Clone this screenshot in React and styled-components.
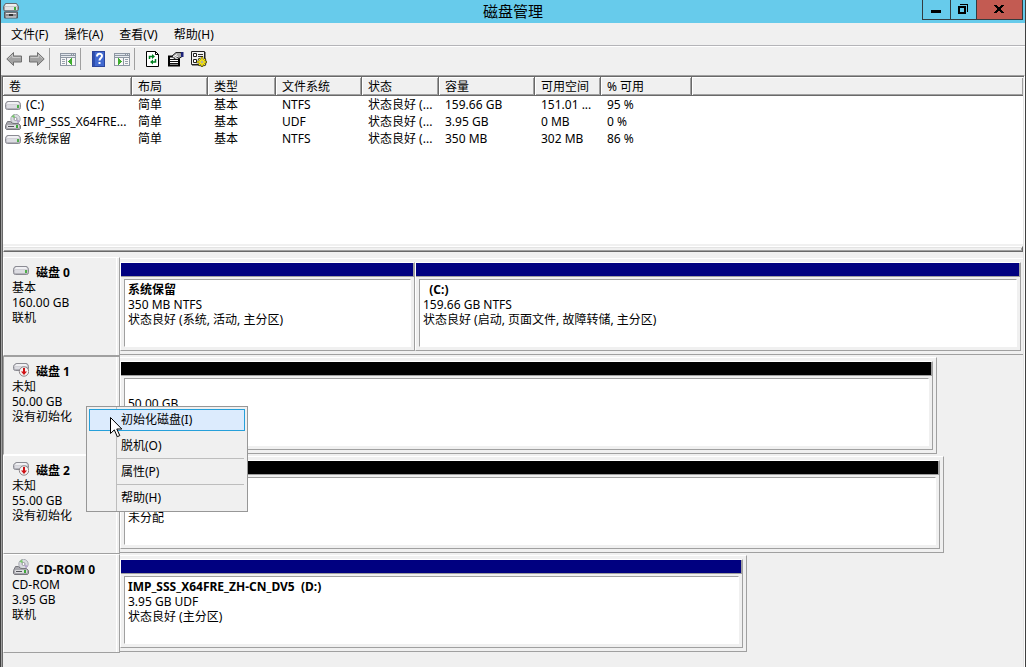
import styled, { createGlobalStyle } from "styled-components";

const FACE = "#f0f0f0";
const LIGHT = "#ffffff";
const SHADOW = "#a0a0a0";
const DARK = "#696969";
const NAVY = "#000080";

const MENUS = ["文件(F)", "操作(A)", "查看(V)", "帮助(H)"];

const COLUMNS = [
  { title: "卷", width: 129 },
  { title: "布局", width: 76 },
  { title: "类型", width: 68 },
  { title: "文件系统", width: 86 },
  { title: "状态", width: 77 },
  { title: "容量", width: 96 },
  { title: "可用空间", width: 66 },
  { title: "% 可用", width: 91 },
];

const VOLUMES = [
  {
    icon: "disk",
    name: " (C:)",
    cells: ["简单", "基本", "NTFS", "状态良好 (...", "159.66 GB", "151.01 ...", "95 %"],
  },
  {
    icon: "cd",
    name: "IMP_SSS_X64FRE...",
    cells: ["简单", "基本", "UDF", "状态良好 (...", "3.95 GB", "0 MB", "0 %"],
  },
  {
    icon: "disk",
    name: "系统保留",
    cells: ["简单", "基本", "NTFS", "状态良好 (...", "350 MB", "302 MB", "86 %"],
  },
];

const DISKS = [
  {
    icon: "disk",
    name: "磁盘 0",
    info: ["基本", "160.00 GB", "联机"],
    width: 100,
    partitions: [
      { grow: 293, name: "系统保留", size: "350 MB NTFS", status: "状态良好 (系统, 活动, 主分区)" },
      {
        grow: 604,
        name: "  (C:)",
        size: "159.66 GB NTFS",
        status: "状态良好 (启动, 页面文件, 故障转储, 主分区)",
      },
    ],
  },
  {
    icon: "offline",
    name: "磁盘 1",
    info: ["未知", "50.00 GB", "没有初始化"],
    width: 90.5,
    selected: true,
    partitions: [{ grow: 1, free: true, name: " ", size: "50.00 GB", status: "未分配" }],
  },
  {
    icon: "offline",
    name: "磁盘 2",
    info: ["未知", "55.00 GB", "没有初始化"],
    width: 91.3,
    partitions: [{ grow: 1, free: true, name: " ", size: "55.00 GB", status: "未分配" }],
  },
  {
    icon: "cd",
    name: "CD-ROM 0",
    info: ["CD-ROM", "3.95 GB", "联机"],
    width: 69.4,
    partitions: [
      {
        grow: 1,
        name: "IMP_SSS_X64FRE_ZH-CN_DV5  (D:)",
        size: "3.95 GB UDF",
        status: "状态良好 (主分区)",
      },
    ],
  },
];

const MENU_ITEMS = ["初始化磁盘(I)", "脱机(O)", "属性(P)", "帮助(H)"];

const DiskIcon = () => (
  <Icon viewBox="0 0 16 16">
    <path
      d="M3 4.500h10c1.500 0 2.500 1.500 2.500 3v3c0 1.500-1 2-2 2h-11c-1 0-2-.5-2-2v-3c0-1.500 1-3 2.500-3z"
      fill="#b4b4bb"
      stroke="#8b8b93"
    />
    <path d="M3 5h10l2 2.500H1z" fill="#f0f0f3" />
    <rect x="1.500" y="8" width="13" height="3" rx="1" fill="#dcdce2" />
    <rect x="12" y="8" width="2" height="3" fill="#4fae4a" />
  </Icon>
);

const OfflineIcon = () => (
  <Icon viewBox="0 0 16 16">
    <path
      d="M4 2.500h9c1.500 0 2.500 1.500 2.500 3v2c0 1.500-1 2-2 2h-11c-1 0-2-.5-2-2v-2c0-1.500 2-3 3.500-3z"
      fill="#b4b4bb"
      stroke="#8b8b92"
    />
    <path d="M3.500 3H13l2 2.500H1z" fill="#f0f0f3" />
    <rect x="1.500" y="6" width="12" height="2" rx="1" fill="#dcdce2" />
    <circle cx="11" cy="10.500" r="4.700" fill="#f6f2f2" stroke="#8c8589" />
    <path d="M10 7h2v3.500h2l-3 3.500-3-3.500h2z" fill="#cf1014" />
  </Icon>
);

const CdIcon = () => (
  <Icon viewBox="0 0 16 16">
    <circle cx="10.500" cy="5" r="4.700" fill="#d9dce0" stroke="#aaacb4" />
    <path d="M10.500 5L6.500 2.500 9 .5z" fill="#79c66d" />
    <path d="M10.500 5l4.300 1.800-1.800 2.400z" fill="#b6a4cf" />
    <circle cx="10.500" cy="5" r="1.500" fill="#fff" stroke="#96969e" />
    <path d="M2.500 7.500h3l2 2h6l2 2v3l-1 1h-13l-1-1v-3z" fill="#a7a7ad" stroke="#77777d" />
    <rect x="2" y="11" width="12" height="3" rx="1" fill="#dedee2" />
    <path d="M3 12.500h6" stroke="#55555b" />
    <rect x="11" y="11" width="2" height="3" fill="#3fa83b" />
  </Icon>
);

const ICONS = { disk: DiskIcon, offline: OfflineIcon, cd: CdIcon };

const AppIcon = () => (
  <Icon viewBox="0 0 16 16">
    <path d="M2.500.5h11l2 3v3l-1 1.500h-13l-1-1.500v-3z" fill="#9fa2a6" stroke="#676b70" />
    <path d="M3 1h10l1.500 2.500h-13z" fill="#eeeeee" />
    <rect x="2" y="4" width="12" height="3" fill="#e2e2e4" />
    <rect x="11" y="4" width="2" height="3" fill="#3fae3a" />
    <path d="M1.500 9h13v6h-13z" fill="#8a8d92" stroke="#55595e" />
    <path d="M3 10.500h10M3 14h10" stroke="#e4e4e6" />
    <rect x="6" y="11" width="4" height="2" fill="#333" />
  </Icon>
);

const ArrowIcon = ({ forward }) => (
  <Icon viewBox="0 0 16 16">
    <g transform={forward ? "translate(16 0) scale(-1 1)" : undefined}>
      <path d="M.8 8L7.500 1.500v3.500h8v6h-8v3.500z" fill="#a3a3a3" stroke="#707070" />
      <path d="M2.500 7.500L6.500 3.800V6.500h8" fill="none" stroke="#c8c8c8" />
    </g>
  </Icon>
);

const PaneIcon = ({ right }) => (
  <Icon viewBox="0 0 16 16" shapeRendering="crispEdges">
    <path d="M0 2h16v13H0z" fill="#8e97a3" />
    <path d="M1 3h10v1H1zM12 3h1v1h-1zM14 3h1v1h-1z" fill="#dfe5ec" />
    <path d="M1 5h14v1H1z" fill="#e8ecf0" />
    <path d={right ? "M1 7h8v7H1zM10 7h5v7h-5z" : "M1 7h5v7H1zM7 7h8v7H7z"} fill="#f8f8f8" />
    <path
      d={right ? "M11 8h3v1h-3zM11 10h3v1h-3zM11 12h3v1h-3z" : "M2 8h3v1H2zM2 10h3v1H2zM2 12h3v1H2z"}
      fill="#98a2ae"
    />
    <path d={right ? "M4 7v7l4-3.500z" : "M12 7v7l-4-3.500z"} fill="#3fae2f" />
  </Icon>
);

const HelpIcon = () => (
  <Icon viewBox="0 0 16 16">
    <rect x="1.500" y=".5" width="12" height="15" fill="#4169cf" stroke="#2c459c" />
    <path d="M2 1h2v14H2z" fill="#2e4fae" />
    <path
      d="M6 5.500C6 2 11 2 11 5c0 2-2.500 2-2.500 4.500"
      fill="none"
      stroke="#fff"
      strokeWidth="2"
    />
    <rect x="7.500" y="11" width="2" height="2" fill="#fff" />
  </Icon>
);

const RefreshIcon = () => (
  <Icon viewBox="0 0 16 16">
    <path d="M1.500.5h9l3 3v12h-12z" fill="#fff" stroke="#000" />
    <path d="M10.500.5v3h3" fill="none" stroke="#000" />
    <path d="M4.500 8V5.500H8M10.500 8v3H7" fill="none" stroke="#008020" strokeWidth="1.500" />
    <path d="M7 3l3 2.500L7 8zM8 8.500L5 11l3 2.500z" fill="#008020" />
  </Icon>
);

const PropertiesIcon = () => (
  <Icon viewBox="0 0 16 16">
    <path d="M1 5.500h10v9H1z" fill="#fff" stroke="#000" strokeWidth="2" />
    <path d="M2 8.500h8M2 10.500h8M2 12.500h8" stroke="#111" />
    <path d="M4 5l4-3.500h5l1 4-3 2-2-1-3 1z" fill="#a8a8a8" stroke="#222" />
    <path d="M5 6l4-2.500M7 7l3-2" stroke="#fff" />
    <path d="M13 1h2.500v5H13z" fill="#1d2379" />
  </Icon>
);

const SettingsIcon = () => (
  <Icon viewBox="0 0 16 16">
    <path d="M.5.5h13v13H.5z" fill="#f4f4f4" stroke="#222" />
    <path d="M14.500 1v13M1 14.500h13" stroke="#888" />
    <path d="M2.500 2.500h3v3h-3zM2.500 8.500h3v3h-3z" fill="#fff" stroke="#222" />
    <path d="M7 3.500h5M7 5.500h5" stroke="#333" />
    <path
      d="M11 5.500v10.500M5.500 11H16M7.500 7.500l7 7M14.500 7.500l-7 7"
      stroke="#1c1a00"
      strokeWidth="2.400"
    />
    <path d="M11 6v9.500M6 11h9.500M8 8l6 6M14 8l-6 6" stroke="#f8e71c" strokeWidth="1.500" />
    <circle cx="11" cy="11" r="2.800" fill="#f8e71c" />
    <circle cx="11" cy="11" r="1" fill="#fff" stroke="#555" strokeWidth=".5" />
  </Icon>
);

const TitleBar = () => (
  <TitleRow>
    <TitleIcon>
      <AppIcon />
    </TitleIcon>
    <Title>磁盘管理</Title>
    <WindowButtons>
      <WindowButton $width={28} aria-label="最小化">
        <Glyph viewBox="0 0 10 12">
          <path d="M0 8h10v3H0z" />
        </Glyph>
      </WindowButton>
      <WindowButton $width={26} aria-label="还原">
        <Glyph viewBox="0 0 10 12">
          <path d="M0 4h8v8H0zM2 6v4h4V6z" fillRule="evenodd" />
          <path d="M2 2h8v8H9V3H2z" />
        </Glyph>
      </WindowButton>
      <WindowButton $width={47} $close aria-label="关闭">
        <Glyph viewBox="0 0 10 12">
          <path d="M0 3h3v1h1v1h2V4h1V3h3v1H9v1H8v1H7v2h1v1h1v1h1v1H7v-1H6V9H4v1H3v1H0v-1h1V9h1V8h1V6H2V5H1V4H0z" />
        </Glyph>
      </WindowButton>
    </WindowButtons>
  </TitleRow>
);

const Toolbar = () => (
  <Tools>
    <ToolButton aria-label="后退"><ArrowIcon /></ToolButton>
    <ToolButton aria-label="前进"><ArrowIcon forward /></ToolButton>
    <ToolDivider />
    <ToolButton aria-label="显示控制台树"><PaneIcon /></ToolButton>
    <ToolDivider />
    <ToolButton aria-label="帮助"><HelpIcon /></ToolButton>
    <ToolButton aria-label="显示操作窗格"><PaneIcon right /></ToolButton>
    <ToolDivider />
    <ToolButton aria-label="刷新"><RefreshIcon /></ToolButton>
    <ToolButton aria-label="属性"><PropertiesIcon /></ToolButton>
    <ToolButton aria-label="设置"><SettingsIcon /></ToolButton>
  </Tools>
);

const VolumeList = () => (
  <ListPane>
    <VolumeTable>
      <colgroup>
        {COLUMNS.map(({ title, width }) => (
          <col key={title} width={width} />
        ))}
        <col />
      </colgroup>
      <thead>
        <tr>
          {COLUMNS.map(({ title }) => (
            <HeadCell key={title}>{title}</HeadCell>
          ))}
          <HeadCell $last />
        </tr>
      </thead>
      <tbody>
        {VOLUMES.map(({ icon, name, cells }) => {
          const RowIcon = ICONS[icon];
          return (
            <tr key={name}>
              <NameCell>
                <VolumeName>
                  <RowIcon />
                  {name}
                </VolumeName>
              </NameCell>
              {cells.map((cell, i) => (
                <Cell key={i}>{cell}</Cell>
              ))}
              <Cell />
            </tr>
          );
        })}
      </tbody>
    </VolumeTable>
  </ListPane>
);

const Disk = ({ icon, name, info, width, selected, partitions }) => {
  const HeadIcon = ICONS[icon];
  return (
    <DiskRow>
      <DiskLabel $selected={selected}>
        <DiskName>
          <HeadIcon />
          {name}
        </DiskName>
        {info.map((line) => (
          <Line key={line}>{line}</Line>
        ))}
      </DiskLabel>
      <DiskTrack>
        <DiskFrame $width={width}>
          {partitions.map((part) => (
            <Partition key={part.status} $grow={part.grow}>
              <Stripe $free={part.free} />
              <PartitionBody>
                <Line $bold>{part.name}</Line>
                <Line>{part.size}</Line>
                <Line>{part.status}</Line>
              </PartitionBody>
            </Partition>
          ))}
        </DiskFrame>
      </DiskTrack>
    </DiskRow>
  );
};

const ContextMenu = () => (
  <MenuBox role="menu">
    {MENU_ITEMS.map((item, i) => (
      <MenuItem key={item} role="menuitem" $active={i === 0}>
        {item}
      </MenuItem>
    ))}
  </MenuBox>
);

export default function App() {
  return (
    <>
      <GlobalStyle />
      <Window>
        <TitleBar />
        <MenuBar>
          {MENUS.map((menu) => (
            <MenuButton key={menu}>{menu}</MenuButton>
          ))}
        </MenuBar>
        <Toolbar />
        <Client>
          <VolumeList />
          <Splitter />
          {DISKS.map((disk) => (
            <Disk key={disk.name} {...disk} />
          ))}
        </Client>
        <ContextMenu />
        <Cursor viewBox="0 0 13 21">
          <path d="M.5.5v16l3.800-3.600 3 6.800 2.500-1.100-3-6.600h5z" fill="#fff" stroke="#000" />
        </Cursor>
      </Window>
    </>
  );
}

const GlobalStyle = createGlobalStyle`
  * {
    box-sizing: border-box;
  }
  body {
    margin: 0;
    background: ${FACE};
    color: #000;
    font: 12px/15px "Noto Sans", "Noto Sans CJK SC", sans-serif;
    cursor: default;
  }
  button {
    margin: 0;
    padding: 0;
    border: 0;
    background: none;
    color: inherit;
    font: inherit;
  }
`;

const Window = styled.div`
  position: relative;
  display: flex;
  flex-direction: column;
  min-height: 100vh;
  border: 1px solid #404040;
  border-width: 0 1px;
`;

const Icon = styled.svg`
  display: block;
  flex: none;
  width: 16px;
  height: 16px;
`;

const TitleRow = styled.header`
  display: grid;
  grid-template-columns: 1fr auto 1fr;
  height: 23px;
  background: #67cbeb;
`;
const TitleIcon = styled.div`
  padding: 3px 2px;
`;
const Title = styled.h1`
  margin: 0;
  font-size: 15px;
  font-weight: 400;
  line-height: 23px;
`;
const WindowButtons = styled.div`
  display: flex;
  justify-content: flex-end;
  height: 20px;
  padding-right: 2px;
`;
const WindowButton = styled.button`
  display: flex;
  align-items: center;
  justify-content: center;
  width: ${({ $width }) => $width}px;
  padding-right: 2px;
  border: 1px solid #333c40;
  border-width: 0 0 1px 1px;
  background: ${({ $close }) => ($close ? "#c35b52" : "transparent")};
  &:last-child {
    border-right-width: 1px;
  }
`;
const Glyph = styled.svg`
  width: 10px;
  height: 12px;
  margin-bottom: 4px;
  shape-rendering: crispEdges;
`;

const MenuBar = styled.nav`
  display: flex;
  gap: 16px;
  height: 23px;
  padding: 0 10px;
  border-bottom: 1px solid #b4b4b8;
`;
const MenuButton = styled.button`
  height: 22px;
`;

const Tools = styled.div`
  display: flex;
  align-items: center;
  height: 29px;
  padding: 0 1px 5px;
  border-top: 1px solid ${LIGHT};
`;
const ToolButton = styled.button`
  display: flex;
  align-items: center;
  justify-content: center;
  width: 23px;
  height: 22px;
`;
const ToolDivider = styled.span`
  width: 1px;
  height: 22px;
  margin: 0 6px 0 1px;
  background: ${SHADOW};
`;

const Client = styled.main`
  flex: 1;
  border: 1px solid;
  border-color: ${SHADOW} ${LIGHT} ${FACE} ${SHADOW};
  border-bottom: 0;
  box-shadow: inset 1px 1px ${DARK}, inset -1px 0 #e3e3e3;
  padding: 1px 1px 0;
`;

const ListPane = styled.section`
  min-height: 167px;
  background: ${LIGHT};
`;
const VolumeTable = styled.table`
  width: 100%;
  table-layout: fixed;
  border-spacing: 0;
  white-space: pre;
`;
const HeadCell = styled.th`
  height: 19px;
  padding: 0 0 0 6px;
  border: 0 solid ${DARK};
  border-width: 0 ${({ $last }) => ($last ? 0 : 1)}px 1px 0;
  background: ${FACE};
  box-shadow: inset 1px 1px ${LIGHT}, inset -1px -1px ${SHADOW};
  font-weight: 400;
  text-align: left;
`;
const Cell = styled.td`
  height: 17px;
  padding: 0 0 0 6px;
`;
const NameCell = styled(Cell)`
  padding-left: 2px;
`;
const VolumeName = styled.div`
  display: flex;
  align-items: center;
  gap: 2px;
`;

const Splitter = styled.div`
  height: 6px;
  margin: 2px 0 5px;
  border: 1px solid;
  border-color: ${LIGHT} ${DARK} ${DARK} ${FACE};
  box-shadow: inset 0 1px #e3e3e3, inset -1px -1px ${SHADOW};
`;

const DiskRow = styled.section`
  display: flex;
`;
const DiskLabel = styled.div`
  flex: none;
  width: 117px;
  padding: 7px 0 0 8px;
  border: 1px solid;
  border-color: ${({ $selected }) =>
    $selected ? `${SHADOW} ${SHADOW} ${LIGHT} ${SHADOW}` : `${LIGHT} ${SHADOW} ${SHADOW} ${LIGHT}`};
  box-shadow: inset -2px 0 ${FACE}, inset -3px 0 ${LIGHT};
`;
const DiskName = styled.div`
  display: flex;
  gap: 7px;
  height: 15px;
  padding-left: 1px;
  font-weight: 700;
  svg {
    margin-top: -3px;
  }
`;
const Line = styled.div`
  height: 15px;
  font-weight: ${({ $bold }) => ($bold ? 700 : 400)};
  white-space: pre;
`;
const DiskTrack = styled.div`
  flex: 1;
  min-width: 0;
  padding: 1px 0;
`;
const DiskFrame = styled.div`
  display: flex;
  width: ${({ $width }) => $width}%;
  padding: 3px ${({ $width }) => ($width < 100 ? 3 : 2)}px 3px 0;
  border: 0 solid ${SHADOW};
  border-width: 1px ${({ $width }) => ($width < 100 ? 1 : 0)}px 1px 0;
  border-top-color: ${LIGHT};
`;
const Partition = styled.div`
  flex: ${({ $grow }) => $grow} 1 0;
  min-width: 0;
  border: 1px solid;
  border-color: ${LIGHT} ${SHADOW} ${SHADOW} ${LIGHT};
`;
const Stripe = styled.div`
  height: 14px;
  border: 0 solid ${SHADOW};
  border-width: 0 1px 1px 0;
  background: ${({ $free }) => ($free ? "#000" : NAVY)};
`;
const PartitionBody = styled.div`
  min-height: 68px;
  margin: 2px 3px 3px;
  padding: 2px 3px;
  border: 1px solid;
  border-color: ${SHADOW} ${LIGHT} ${LIGHT} ${SHADOW};
  background: ${LIGHT};
  overflow: hidden;
`;

const MenuBox = styled.div`
  position: absolute;
  top: 406px;
  left: 85px;
  display: flex;
  flex-direction: column;
  gap: 4px;
  width: 162px;
  padding: 2px;
  border: 1px solid #979797;
  background: linear-gradient(#bdbdbd, #bdbdbd) 29px 0 / 1px 100% no-repeat ${FACE};
`;
const MenuItem = styled.button`
  position: relative;
  height: 22px;
  padding: 0 0 1px 31px;
  border: 1px solid ${({ $active }) => ($active ? "#26a0da" : "transparent")};
  background: ${({ $active }) => ($active ? "#dcebfd" : "transparent")};
  text-align: left;
  & + &::before {
    content: "";
    position: absolute;
    top: -4px;
    right: 0;
    left: 27px;
    height: 1px;
    background: #bdbdbd;
  }
`;
const Cursor = styled.svg`
  position: absolute;
  top: 417px;
  left: 109px;
  width: 13px;
  height: 21px;
`;
